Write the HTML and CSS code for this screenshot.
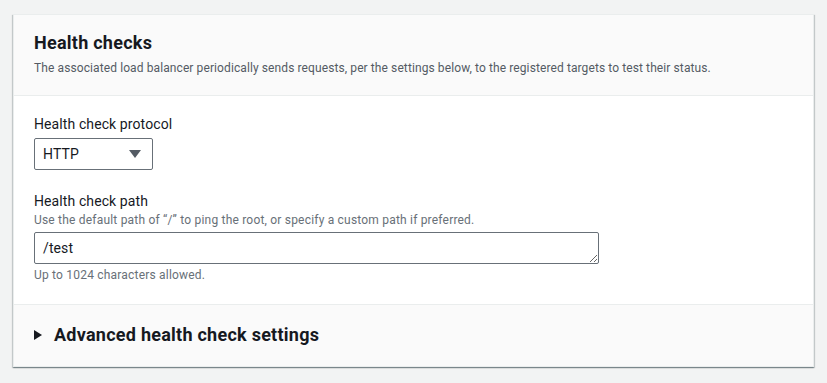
FILE: index.html
```html
<!DOCTYPE html>
<html lang="en">
  <head>
    <meta charset="UTF-8" />
    <title>Health checks</title>
    <link rel="stylesheet" href="styles.css">
  </head>
  <body>
    <div class="panel">
      <div class="panel-header">
        <h2 class="panel-title">Health checks</h2>
        <p class="panel-desc">
          The associated load balancer periodically sends requests, per the settings below, to the registered targets to test their status.
        </p>
      </div>

      <div class="panel-body">
        <div class="field">
          <label class="field-label" for="protocol">Health check protocol</label>
          <div class="select">
            <span class="select-value">HTTP</span>
            <span class="select-caret"></span>
          </div>
        </div>

        <div class="field">
          <label class="field-label" for="path">Health check path</label>
          <div class="field-hint">Use the default path of “/” to ping the root, or specify a custom path if preferred.</div>
          <textarea id="path" class="path-input" rows="1">/test</textarea>
          <div class="field-hint field-after">Up to 1024 characters allowed.</div>
        </div>
      </div>

      <div class="panel-footer">
        <span class="expand-caret"></span>
        <span class="footer-title">Advanced health check settings</span>
      </div>
    </div>
  </body>
</html>
```

FILE: styles.css
```css
* {
  margin: 0;
  padding: 0;
  box-sizing: border-box;
  font-family: Roboto, "Open Sans", sans-serif;
  letter-spacing: 0.1px;
}

body {
  background: #f2f3f3;
  padding: 14px 13px;
  color: #16191f;
}

.panel {
  width: 801px;
  background: #fff;
  border: 1px solid #eaeded;
  box-shadow: 0 1px 1px 0 rgba(0, 28, 36, 0.3), 1px 1px 1px 0 rgba(0, 28, 36, 0.15),
    -1px 1px 1px 0 rgba(0, 28, 36, 0.15);
}

.panel-header {
  background: #fafafa;
  border-bottom: 1px solid #eaeded;
  padding: 17px 20px 19px;
}

.panel-title {
  font-size: 18px;
  line-height: 22px;
  font-weight: 700;
  letter-spacing: 0.25px;
}

.panel-desc {
  font-size: 12px;
  line-height: 16px;
  color: #545b64;
  margin-top: 6px;
}

.panel-body {
  padding: 17px 20px 21px;
}

.field + .field {
  margin-top: 20px;
}

.field-label {
  display: block;
  font-size: 14px;
  line-height: 22px;
}

.field-hint {
  font-size: 12px;
  line-height: 16px;
  color: #687078;
  letter-spacing: 0.2px;
}

.field-after {
  margin-top: 3px;
}

.select {
  width: 119px;
  height: 32px;
  margin-top: 3px;
  border: 1px solid #687078;
  border-radius: 2px;
  display: flex;
  align-items: center;
  justify-content: space-between;
  padding: 0 11px 0 8px;
}

.select-value {
  font-size: 14px;
  color: #16191f;
}

.select-caret {
  width: 0;
  height: 0;
  border-left: 6px solid transparent;
  border-right: 6px solid transparent;
  border-top: 8px solid #545b64;
}

.path-input {
  display: block;
  width: 565px;
  height: 32px;
  margin-top: 4px;
  border: 1px solid #687078;
  border-radius: 2px;
  padding: 5px 8px;
  font-size: 14px;
  line-height: 20px;
  color: #16191f;
  resize: vertical;
  overflow: hidden;
}

.panel-footer {
  background: #fafafa;
  border-top: 1px solid #eaeded;
  padding: 18px 20px 19px;
  display: flex;
  align-items: center;
  gap: 12px;
}

.expand-caret {
  width: 0;
  height: 0;
  border-top: 5px solid transparent;
  border-bottom: 5px solid transparent;
  border-left: 8px solid #16191f;
}

.footer-title {
  font-size: 18px;
  line-height: 24px;
  font-weight: 700;
  letter-spacing: 0.25px;
}
```
